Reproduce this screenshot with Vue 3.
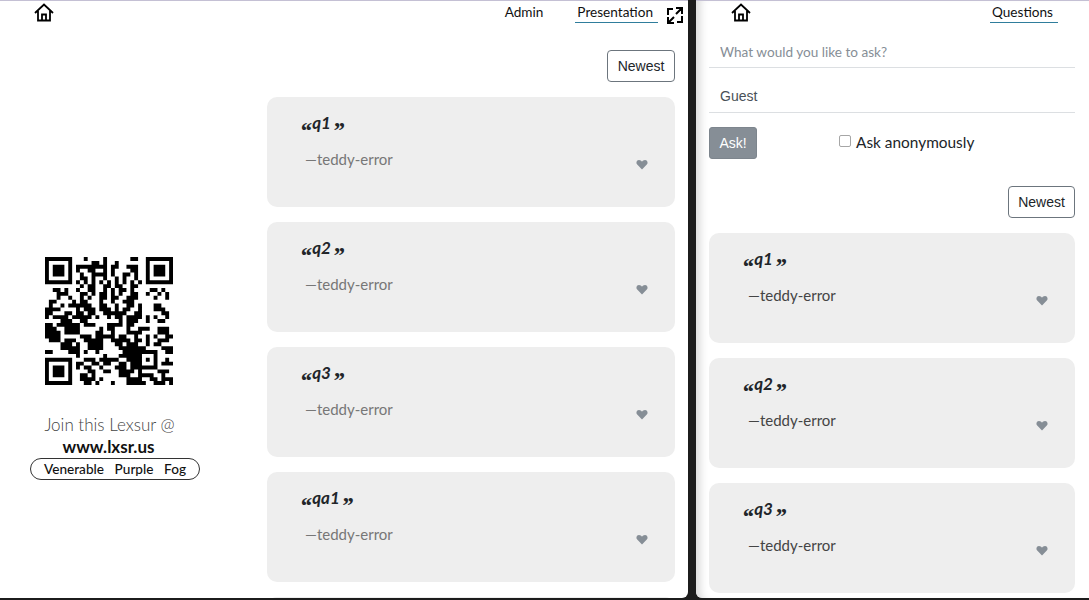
<script setup>
import { ref, computed } from 'vue'

const guest = ref('Guest')
const anonymous = ref(false)

const leftQuestions = ['q1', 'q2', 'q3', 'qa1']
const rightQuestions = ['q1', 'q2', 'q3']

const heartPath = 'M6 10.5 1.2 5.600C-.4 3.900.6 1 3 1c1.400 0 2.400.8 3 1.800C6.600 1.800 7.600 1 9 1c2.400 0 3.400 2.900 1.800 4.600z'

const qrRows = [
  '111111100010000100000011001111111',
  '100000100000110100100000001000001',
  '101110101111111101100111001011101',
  '101110101001100101000011001011101',
  '101110100100111101001101001011101',
  '100000100110100100101001001000001',
  '111111101010101010101010101111111',
  '000000000101100110110011000000000',
  '001101001001100101011010000110100',
  '000111000110101101010011001001010',
  '000100100101001101100111000010010',
  '011000010110001001001110000000000',
  '010010111111001100100110100011000',
  '111100001011101110101100100011100',
  '110001101101100111111001100000110',
  '101111011111010010110111101010010',
  '000011100110000000010111001001100',
  '110111111011100011110110000000000',
  '111001111000001011000100111001110',
  '111101111000011001000111100001110',
  '111100000111011111011001001010011',
  '011101110011111001111101101001110',
  '000011101001111000110111001011000',
  '000011111001111000011111110000111',
  '110000111010010000001111111110011',
  '000000001000000100011111100010000',
  '111111100011101111100111101010010',
  '100000101100110110011011100010111',
  '101110101011001000111011111110000',
  '101110100001100110011110100001110',
  '101110100110100000011100111100100',
  '100000100111101000000111100110111',
  '111111100011010001000111110011101'
]

// one path for all dark modules of the code
const qrPath = computed(() => {
  let d = ''
  qrRows.forEach((row, y) => {
    row.split('').forEach((cell, x) => {
      if (cell === '1') d += `M${x} ${y}h1v1h-1z`
    })
  })
  return d
})
</script>

<template>
  <div class="screen">
    <section class="panel left">
      <nav class="nav">
        <svg class="home" viewBox="0 0 20 19" width="20" height="19">
          <path d="M1 10 10 1.5 19 10M4 8v9.5h12V8M8 17.5v-6h4v6" />
        </svg>
        <div class="nav-links">
          <a class="nav-link">Admin</a>
          <a class="nav-link active">Presentation</a>
          <svg class="expand" viewBox="0 0 16 17" width="16" height="17">
            <path d="M1 8V2h5M15 9v6h-5M9 1h6v6M15 1 9 7M1 10v6h6M1 16l6-6" />
          </svg>
        </div>
      </nav>

      <div class="body">
        <aside class="join">
          <svg class="qr" viewBox="0 0 33 33" width="128" height="128">
            <path :d="qrPath" />
          </svg>
          <p class="join-text">Join this Lexsur @</p>
          <p class="join-url">www.lxsr.us</p>
          <div class="room">
            <span>Venerable</span><span>Purple</span><span>Fog</span>
          </div>
        </aside>

        <div class="feed">
          <div class="sort"><button class="newest">Newest</button></div>
          <article v-for="q in leftQuestions" :key="q" class="card">
            <div>
              <p class="question"><b class="mark">‘‘</b>{{ q }}<b class="mark close">’’</b></p>
              <p class="author muted">—teddy-error</p>
            </div>
            <svg class="heart" viewBox="0 0 12 11" width="12" height="11">
              <path :d="heartPath" />
            </svg>
          </article>
          <div class="card"></div>
        </div>
      </div>
    </section>

    <section class="panel right">
      <nav class="nav nav-right">
        <svg class="home" viewBox="0 0 20 19" width="20" height="19">
          <path d="M1 10 10 1.5 19 10M4 8v9.5h12V8M8 17.5v-6h4v6" />
        </svg>
        <a class="nav-link active">Questions</a>
      </nav>

      <form class="ask" @submit.prevent>
        <input class="field" type="text" placeholder="What would you like to ask?" />
        <input class="field guest" type="text" v-model="guest" />
        <div class="ask-row">
          <button class="ask-btn">Ask!</button>
          <label class="anon">
            <input type="checkbox" v-model="anonymous" />
            Ask anonymously
          </label>
        </div>
      </form>

      <div class="sort"><button class="newest">Newest</button></div>
      <article v-for="q in rightQuestions" :key="q" class="card">
        <div>
          <p class="question"><b class="mark">‘‘</b>{{ q }}<b class="mark close">’’</b></p>
          <p class="author dark">—teddy-error</p>
        </div>
        <svg class="heart" viewBox="0 0 12 11" width="12" height="11">
          <path :d="heartPath" />
        </svg>
      </article>
    </section>
  </div>
</template>

<style>
html,
body {
  margin: 0;
  background: #1c1c1c;
  overflow: hidden;
}
</style>

<style scoped>
.screen {
  display: flex;
  gap: 8px;
  height: 600px;
  overflow: hidden;
  font-family: Lato, "Liberation Sans", sans-serif;
  color: #212529;
}

.panel {
  background: #fff;
  box-sizing: border-box;
  height: 598px;
  overflow: hidden;
  border-top: 1px solid #c4c0d4;
}

.left {
  width: 688px;
  border-bottom-right-radius: 6px;
}

.right {
  width: 393px;
  flex: none;
  padding: 0 14px 0 13px;
  border-bottom-left-radius: 6px;
  box-shadow: inset 10px 0 8px -6px #d8d8d8;
}

.nav {
  display: flex;
  justify-content: space-between;
  height: 27px;
  padding: 2px 5px 0 34px;
  box-sizing: border-box;
}

.nav-right {
  padding: 2px 17px 0 22px;
  margin-bottom: 7px;
}

.home {
  flex: none;
}

.home path {
  fill: none;
  stroke: #000;
  stroke-width: 1.8;
}

.nav-links {
  display: flex;
  align-items: flex-start;
}

.nav-link {
  font-size: 13.6px;
  line-height: 18px;
  color: #111;
  height: 19px;
}

.nav-links .nav-link:first-child {
  margin-right: 32px;
}

.active {
  padding: 0 5px 0 2px;
  border-bottom: 1.5px solid #2f7d9c;
}

.expand {
  margin: 4px 0 0 9px;
  fill: none;
  stroke: #000;
  stroke-width: 2;
}

.body {
  display: flex;
}

.join {
  width: 267px;
  flex: none;
  box-sizing: border-box;
  padding: 229px 50px 0 0;
  display: flex;
  flex-direction: column;
  align-items: center;
}

.qr {
  fill: #000;
}

.join-text {
  margin: 29px 0 0 2px;
  font-size: 17px;
  font-weight: 300;
  line-height: 22px;
  color: #444;
}

.join-url {
  margin: 1px 0 0;
  font-size: 17px;
  font-weight: 700;
  line-height: 20px;
  color: #111;
}

.room {
  box-sizing: border-box;
  display: flex;
  justify-content: space-between;
  flex: none;
  width: 170px;
  height: 22px;
  margin: 1px 0 0 13px;
  padding: 0 13px;
  border: 1px solid #333;
  border-radius: 11px;
  font-size: 13.6px;
  font-weight: 500;
  line-height: 20px;
  color: #111;
}

.feed {
  flex: 1;
  padding: 22px 13px 0 0;
}

.sort {
  display: flex;
  justify-content: flex-end;
  margin-bottom: 15px;
}

.newest {
  width: 68px;
  height: 32px;
  padding: 0;
  background: #fff;
  border: 1px solid #6c757d;
  border-radius: 4px;
  font-family: "Liberation Sans", sans-serif;
  font-size: 14px;
  color: #212529;
}

.right .newest {
  width: 67px;
}

.card {
  box-sizing: border-box;
  display: flex;
  justify-content: space-between;
  height: 110px;
  margin-bottom: 15px;
  padding: 16px 27px 0 33px;
  background: #eee;
  border-radius: 10px;
}

.question {
  margin: 0;
  height: 20px;
  font-size: 17px;
  font-weight: 700;
  font-style: italic;
  line-height: 20px;
  color: #212529;
}

.mark {
  font-family: "Liberation Serif", serif;
  font-size: 24px;
  font-style: normal;
  line-height: 10px;
  letter-spacing: -1.5px;
  vertical-align: -9px;
  margin-right: 1px;
}

.close {
  margin: 0 0 0 2px;
}

.author {
  margin: 16px 0 0 5px;
  font-size: 15px;
  line-height: 20px;
}

.muted {
  color: #777;
}

.dark {
  margin-left: 6px;
  color: #444;
}

.heart {
  margin-top: 46px;
  fill: #868e96;
}

.field {
  display: block;
  box-sizing: border-box;
  width: 100%;
  height: 33px;
  margin-bottom: 12px;
  padding: 2px 11px 0;
  border: 0;
  border-bottom: 1px solid #dcdfe2;
  outline: none;
  background: transparent;
  font-family: Lato, sans-serif;
  font-size: 13.6px;
}

.field::placeholder {
  color: #868e96;
}

.guest {
  padding: 0 11px 1px;
  font-family: "Liberation Sans", sans-serif;
  font-size: 14px;
  color: #495057;
}

.ask-row {
  display: flex;
  align-items: center;
  margin-top: 14px;
}

.ask {
  padding-bottom: 27px;
}

.ask-btn {
  width: 48px;
  height: 32px;
  padding: 0;
  border: 1px solid #7d858d;
  border-radius: 3px;
  background: #868e96;
  color: #fff;
  font-family: "Liberation Sans", sans-serif;
  font-size: 14px;
}

.anon {
  display: flex;
  align-items: center;
  margin: 0 0 2px 82px;
  font-size: 15.4px;
  color: #212529;
}

.anon input {
  appearance: none;
  width: 12px;
  height: 12px;
  margin: 0 5px 2px 0;
  background: #fff;
  border: 1px solid #a6a6a6;
  border-radius: 2px;
}
</style>
